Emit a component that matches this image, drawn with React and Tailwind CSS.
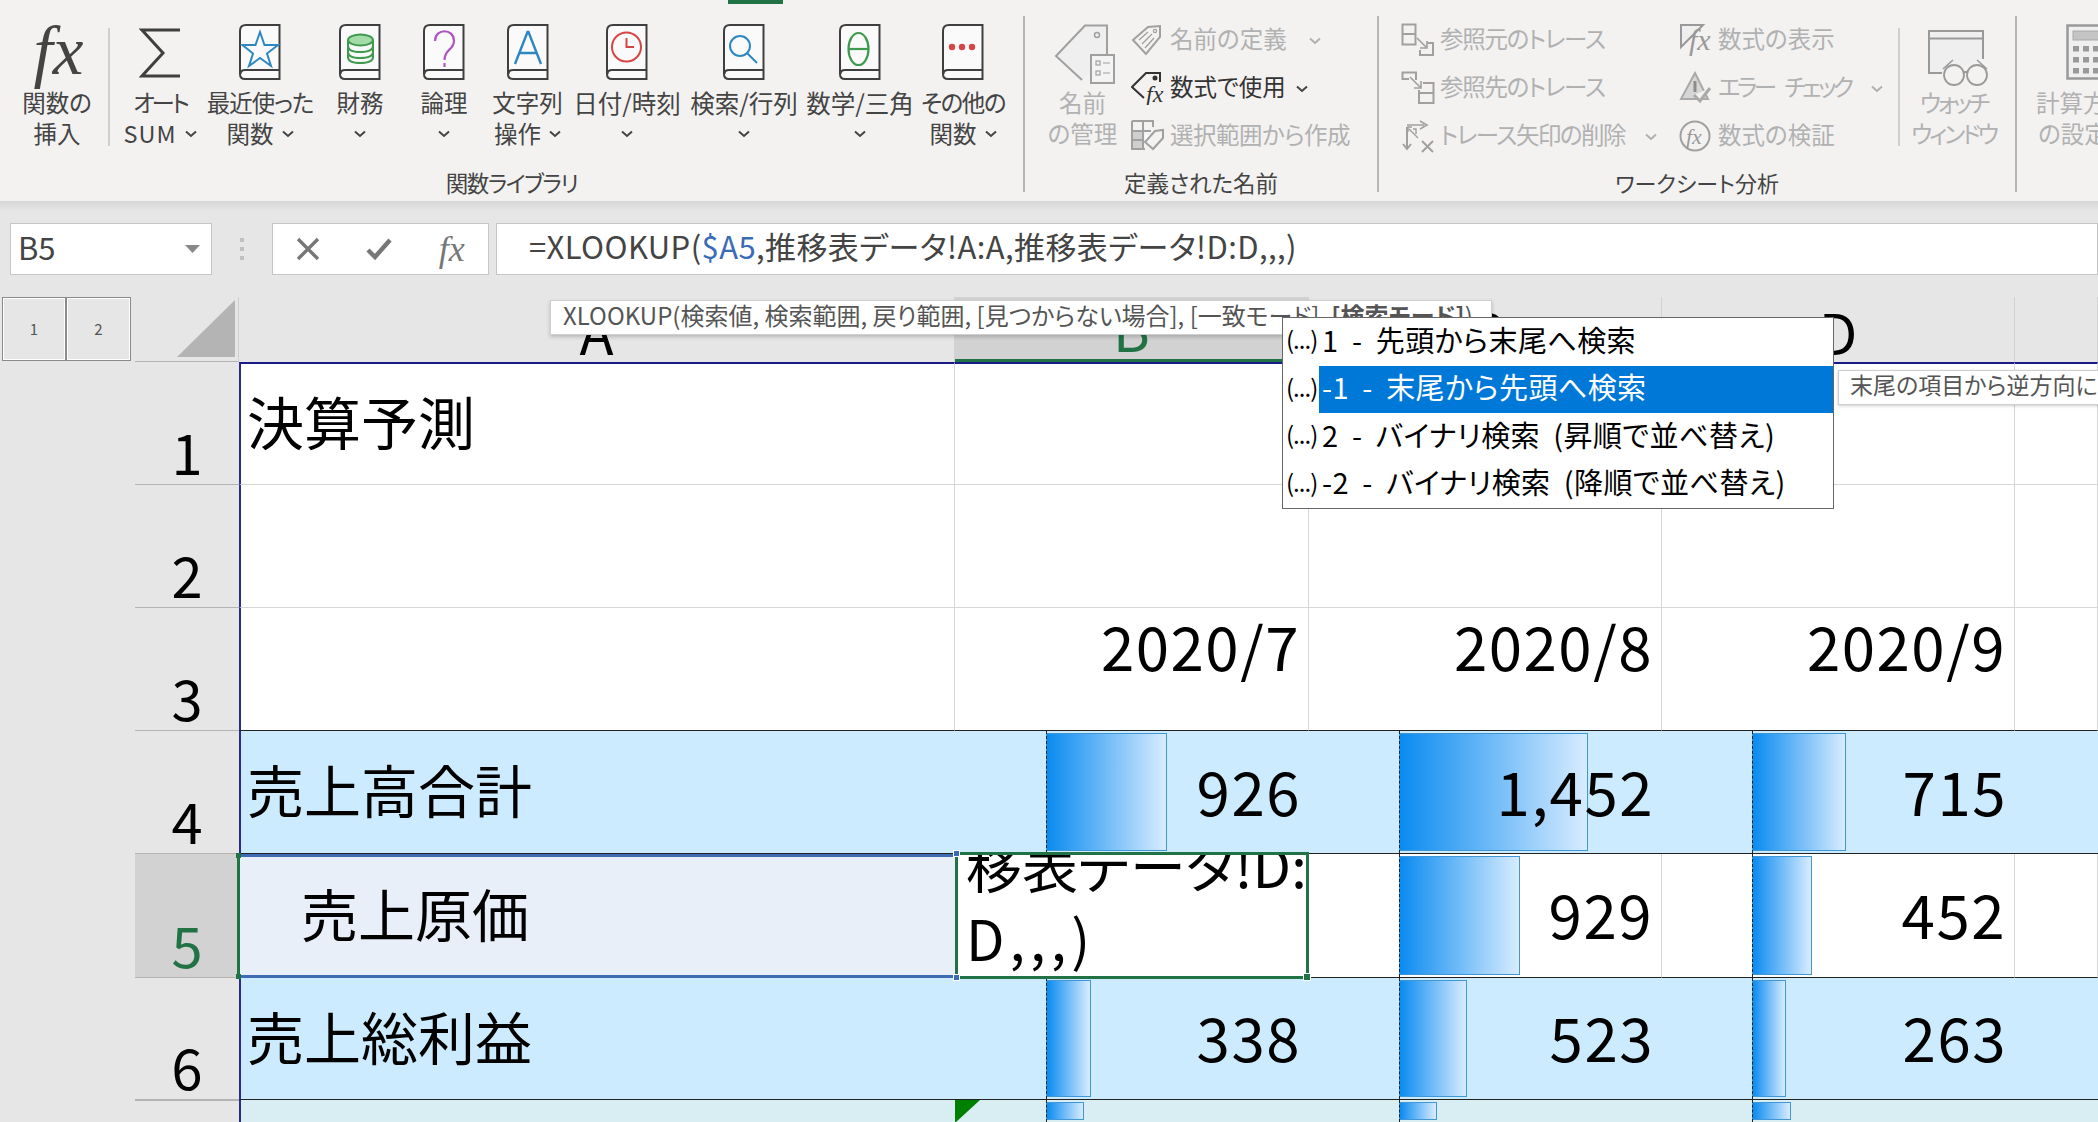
import React from "react";

const Chev = ({ dark }) => (
  <svg width="12" height="8" viewBox="0 0 12 8" className="inline-block shrink-0" fill="none" stroke={dark ? "#444" : "#b0b0b0"} strokeWidth="2">
    <path d="M1 1.5 L6 6 L11 1.5" />
  </svg>
);

const Book = ({ children }) => (
  <svg width="42" height="57" viewBox="0 0 42 57" fill="none">
    <path d="M7 1 H40.5 V55 H6 Q1 55 1 50 V7 Q1 1 7 1 Z" fill="#fafafa" stroke="#3f3f3f" strokeWidth="2" />
    <path d="M40 46 H6 Q1.5 46 1.5 50" stroke="#3f3f3f" strokeWidth="2" />
    {children}
  </svg>
);

const Large = ({ w, icon, lines, muted }) => (
  <div className={`${w} flex flex-col items-center shrink-0 pt-[24px] ${muted ? "text-[#b1b1b1]" : "text-[#444]"}`}>
    <div className="h-[63px] flex items-start justify-center">{icon}</div>
    <div className="text-center leading-[31px] whitespace-nowrap text-[23.5px]">
      {lines.map((l, i) => (
        <div key={i} className="h-[31px] flex items-center justify-center gap-[8px]">
          {l === "v" ? <Chev dark={!muted} /> : l}
        </div>
      ))}
    </div>
  </div>
);

const LineWithChev = ({ t, muted }) => (
  <span className="flex items-center gap-[8px]">
    {t}
    <Chev dark={!muted} />
  </span>
);

const Small = ({ icon, label, dark, chev, gap }) => (
  <div className={`h-[48px] flex items-center text-[23.5px] whitespace-nowrap ${dark ? "text-[#333]" : "text-[#b1b1b1]"}`}>
    <div className="w-[39px] shrink-0">{icon}</div>
    <span className="pb-[4px]">{label}</span>
    {chev && <span className={`${gap} flex`}><Chev dark={dark} /></span>}
  </div>
);

const G = "#a0a0a0";

const fxText = (x, y, size, fill) => (
  <text x={x} y={y} fontFamily="Liberation Serif" fontStyle="italic" fontSize={size} fill={fill}>fx</text>
);

const NameMgr = (
  <svg width="62" height="62" viewBox="0 0 62 62" fill="none" className="ml-[4px]">
    <path d="M53 34 V1.5 H31 L2 32 L28 56" fill="#efefef" stroke={G} strokeWidth="2" />
    <circle cx="43" cy="11" r="2.5" stroke={G} strokeWidth="1.5" />
    <rect x="37" y="31" width="23" height="28" fill="#f3f3f3" stroke={G} strokeWidth="2" />
    <rect x="42" y="37" width="4" height="4" stroke={G} strokeWidth="1.2" />
    <rect x="42" y="47" width="4" height="4" stroke={G} strokeWidth="1.2" />
    <path d="M49 39 H56 M49 49 H56" stroke={G} strokeWidth="1.2" />
  </svg>
);
const DefineName = (
  <svg width="32" height="32" viewBox="0 0 32 32" fill="none" stroke={G} strokeWidth="2" className="-mt-[2px]">
    <path d="M2 16 L17 3 L29 2 L29 13 L15 30 Z" fill="#f3f2f1" />
    <circle cx="24" cy="7" r="1.6" strokeWidth="1.2" />
    <path d="M8 16 L17 8 M11 20 L21 10 M14 24 L23 14" strokeWidth="1.3" />
  </svg>
);
const UseFormula = (
  <svg width="34" height="34" viewBox="0 0 34 34" fill="none" className="-mt-[2px]">
    <path d="M29 11 V2 H15 L1 16 L13 27" stroke="#333" strokeWidth="2" />
    <circle cx="24" cy="7" r="2.5" fill="#333" />
    {fxText(15, 31, 24, "#333")}
  </svg>
);
const CreateSel = (
  <svg width="34" height="34" viewBox="0 0 34 34" fill="none" stroke={G} strokeWidth="2" className="-mt-[2px]">
    <rect x="14" y="16" width="9" height="9" fill="#fff" stroke="none" />
    <rect x="2" y="12" width="10" height="18" fill="#cfcfcf" stroke="none" />
    <path d="M1 2 H23 M1 2 V30 H14 M1 12 H20 M12 2 V30 M1 21 H12 M22 2 V8" />
    <path d="M14 23 L24 12 L32 11 L32 19 L22 30 Z" fill="#f3f2f1" />
  </svg>
);
const TraceP = (
  <svg width="34" height="34" viewBox="0 0 34 34" fill="none" stroke="#a0a0a0" strokeWidth="2" className="-mt-[3px]">
    <rect x="1.5" y="1.5" width="13" height="20" />
    <path d="M1.5 11 H14.5" />
    <path d="M16 15 L25 24 M19 25 H26 V18" strokeWidth="1.6" />
    <path d="M26 20 H32 V32 H19 V27" />
  </svg>
);
const TraceD = (
  <svg width="34" height="34" viewBox="0 0 34 34" fill="none" stroke="#a0a0a0" strokeWidth="2" className="-mt-[3px]">
    <path d="M1.5 9 V1.5 H15 V9" />
    <path d="M1.5 8 H8" />
    <path d="M9 6 L19 16 M13 17 H20 V10" strokeWidth="1.6" />
    <path d="M22 12 H32.5 V32 H18 V19" />
    <path d="M18 22 H32.5" />
  </svg>
);
const RemoveArrows = (
  <svg width="34" height="34" viewBox="0 0 34 34" fill="none" stroke="#a0a0a0" strokeWidth="2" className="-mt-[3px]">
    <path d="M6 8 V30 M2 25 L6 30 L10 25" />
    <path d="M6 6 H23 M19 2 L26 6 L19 10" strokeWidth="1.6" />
    <path d="M8 10 L17 19 M11 8 H7 V13 M12 10 H15 V15" strokeWidth="1.4" />
    <path d="M21 22 L32 33 M32 22 L21 33" />
  </svg>
);
const ShowF = (
  <svg width="34" height="34" viewBox="0 0 34 34" fill="none" className="-mt-[3px]">
    <path d="M2 24 V2 H24 Z" stroke="#999" strokeWidth="2" fill="#efefef" />
    {fxText(10, 27, 30, "#999")}
  </svg>
);
const ErrChk = (
  <svg width="34" height="34" viewBox="0 0 34 34" fill="none" className="-mt-[3px]">
    <path d="M16 2 L29 28 H2 Z" fill="#d6d6d6" stroke="#aaa" strokeWidth="2" />
    <rect x="14.5" y="10" width="3" height="11" fill="#8c8c8c" />
    <path d="M15 24 L21 30 L31 17" stroke="#aaa" strokeWidth="3" fill="#f3f2f1" />
  </svg>
);
const Evaluate = (
  <svg width="34" height="34" viewBox="0 0 34 34" fill="none" className="-mt-[3px]">
    <circle cx="16" cy="17" r="14.5" stroke="#a0a0a0" strokeWidth="2" />
    {fxText(7, 25, 22, "#999")}
  </svg>
);
const Watch = (
  <svg width="62" height="58" viewBox="0 0 62 58" fill="none" stroke="#999" strokeWidth="2">
    <path d="M15 44 H2 V2 H56 V30" fill="#efefef" />
    <path d="M2 9.5 H56" />
    <path d="M16 40 L26 31 M60 40 L50 31" strokeWidth="1.5" />
    <circle cx="27" cy="46" r="10" fill="#f3f2f1" strokeWidth="1.8" />
    <circle cx="50" cy="46" r="10" fill="#f3f2f1" strokeWidth="1.8" />
    <path d="M37 43 H40" />
  </svg>
);
const Calc = (
  <svg width="42" height="56" viewBox="0 0 42 56" fill="none" className="ml-[8px]">
    <rect x="1.5" y="1.5" width="39" height="53" fill="#efefef" stroke="#999" strokeWidth="2.5" />
    <rect x="7" y="7" width="30" height="9" fill="#c4c4c4" stroke="#aaa" />
    {[22, 33, 44].map((y) => [7, 17, 27].map((x) => <rect key={`${x}-${y}`} x={x} y={y} width="6" height="5.5" fill="#999" />))}
  </svg>
);

const blue = "#2f87c2";
const red = "#d64545";
const ribbonBooks = [
  { w: "w-[110px]", l: [<span className="tracking-[-1px]" key="x">最近使った</span>, <LineWithChev t="関数" key="a" />], i: <path d="M21 8 L25.5 21 L39 21 L28 29.5 L32 42 L21 34 L10 42 L14 29.5 L3.5 21 L16.5 21 Z" stroke={blue} strokeWidth="2" /> },
  { w: "w-[90px]", l: ["財務", "v"], i: (
    <g stroke="#3f9a4d" strokeWidth="2">
      <path d="M9 16 V33 Q9 39 21 39 Q34 39 34 33 V16" />
      <path d="M9 22 Q9 28 21 28 Q34 28 34 22 M9 28 Q9 34 21 34 Q34 34 34 28" />
      <ellipse cx="21.5" cy="16" rx="12.5" ry="5.5" fill="#a4dca8" />
    </g>
  ) },
  { w: "w-[78px]", l: ["論理", "v"], i: (
    <g stroke="#ae55c2" strokeWidth="2.2">
      <path d="M12 17 C12 4 31 4 31 17 C31 26 21.5 25 21.5 36" />
      <path d="M21.5 39 V43" />
    </g>
  ) },
  { w: "w-[89px]", l: ["文字列", <LineWithChev t="操作" key="b" />], i: <path d="M8 40 L20.5 8 L21.5 8 L34 40 M12 29 H30" stroke={blue} strokeWidth="2.4" /> },
  { w: "w-[110px]", l: [<span className="text-[24.5px]" key="x">日付/時刻</span>, "v"], i: (
    <g stroke={red} strokeWidth="2">
      <circle cx="20.5" cy="23" r="14.5" />
      <path d="M20.5 14 V23 H28" />
    </g>
  ) },
  { w: "w-[124px]", l: [<span className="text-[24.5px]" key="x">検索/行列</span>, "v"], i: (
    <g stroke={blue} strokeWidth="2">
      <circle cx="17" cy="22" r="10" />
      <path d="M24 29 L34 39" />
    </g>
  ) },
  { w: "w-[108px]", l: [<span className="text-[24.5px]" key="x">数学/三角</span>, "v"], i: (
    <g stroke="#3f9a4d" strokeWidth="2.2">
      <ellipse cx="19.5" cy="25" rx="10" ry="16" />
      <path d="M9.5 25 H29.5" />
    </g>
  ) },
  { w: "w-[98px]", l: [<span className="tracking-[-1.5px]" key="x">その他の</span>, <LineWithChev t="関数" key="c" />], i: (
    <g fill={red}>
      <circle cx="10" cy="23" r="3.2" />
      <circle cx="20" cy="23" r="3.2" />
      <circle cx="30" cy="23" r="3.2" />
    </g>
  ) },
];

const Sep = () => <div className="w-[2px] h-[176px] mt-[16px] shrink-0 bg-[#b8b6b4]" />;

const Ribbon = () => (
  <div className="flex h-[201px] bg-[#f3f2f1] shrink-0">
    <div className="w-[1023px] shrink-0 flex flex-col">
      <div className="h-[166px] flex pl-[12px]">
        <Large
          w="w-[90px]"
          lines={["関数の", "挿入"]}
          icon={<span className="font-['Liberation_Serif',serif] italic text-[69px] leading-[55px] text-[#444] pl-[3px]">fx</span>}
        />
        <div className="w-[2px] h-[118px] mt-[28px] ml-[6px] mr-[5px] bg-[#cfcfcf]" />
        <Large
          w="w-[90px]"
          lines={[<span className="tracking-[-3px]" key="x">オート</span>, <LineWithChev t={<span className="tracking-[1px]">SUM</span>} key="s" />]}
          icon={
            <svg width="42" height="52" viewBox="0 0 42 52" fill="none" stroke="#3f3f3f" strokeWidth="3" className="mt-[3px]">
              <path d="M41 3 H3 L24 26 L3 49 H41" />
            </svg>
          }
        />
        {ribbonBooks.map((b, i) => (
          <Large key={i} w={b.w} lines={b.l} icon={<Book>{b.i}</Book>} />
        ))}
      </div>
      <div className="h-[33px] leading-[33px] text-center text-[22.5px] tracking-[-1.5px] text-[#444]">関数ライブラリ</div>
    </div>
    <Sep />
    <div className="w-[352px] shrink-0 flex flex-col">
      <div className="h-[166px] flex pl-[9px]">
        <Large muted w="w-[97px]" lines={["名前", "の管理"]} icon={NameMgr} />
        <div className="flex flex-col pt-[17px]">
          <Small icon={DefineName} label="名前の定義" chev gap="ml-[22px]" />
          <Small icon={UseFormula} label="数式で使用" dark chev gap="ml-[10px]" />
          <Small icon={CreateSel} label={<span className="tracking-[-0.5px]">選択範囲から作成</span>} />
        </div>
      </div>
      <div className="h-[33px] leading-[33px] text-center text-[22.5px] text-[#444]">定義された名前</div>
    </div>
    <Sep />
    <div className="w-[636px] shrink-0 flex flex-col">
      <div className="h-[166px] flex pl-[22px]">
        <div className="w-[278px] shrink-0 flex flex-col pt-[17px]">
          <Small icon={TraceP} label={<span className="tracking-[-1.3px]">参照元のトレース</span>} />
          <Small icon={TraceD} label={<span className="tracking-[-1.3px]">参照先のトレース</span>} />
          <Small icon={RemoveArrows} label={<span className="tracking-[-1.5px]">トレース矢印の削除</span>} chev gap="ml-[20px]" />
        </div>
        <div className="w-[219px] shrink-0 flex flex-col pt-[17px]">
          <Small icon={ShowF} label="数式の表示" />
          <Small icon={ErrChk} label={<span className="tracking-[-3.5px] [word-spacing:9px]">エラー チェック</span>} chev gap="ml-[20px]" />
          <Small icon={Evaluate} label="数式の検証" />
        </div>
        <div className="w-[2px] h-[118px] mt-[28px] bg-[#cfcfcf]" />
        <Large
          muted
          w="w-[107px]"
          lines={[<span className="tracking-[-3px]" key="a">ウォッチ</span>, <span className="tracking-[-3px]" key="b">ウィンドウ</span>]}
          icon={<div className="mt-[5px] ml-[8px]">{Watch}</div>}
        />
      </div>
      <div className="h-[33px] leading-[33px] text-center text-[22px] text-[#444]">ワークシート分析</div>
    </div>
    <Sep />
    <div className="flex-1 min-w-0">
      <Large muted w="w-[132px]" lines={["計算方法", <LineWithChev muted t="の設定" key="k" />]} icon={Calc} />
    </div>
  </div>
);

const FormulaBar = () => (
  <div className="h-[96px] shrink-0 pt-[22px] flex bg-[linear-gradient(180deg,#d6d6d6_0px,#e6e6e6_10px)]">
    <div className="ml-[10px] w-[202px] h-[52px] bg-white border border-[#c6c6c6] flex items-center justify-between pl-[7px] pr-[11px] text-[31px] text-[#444]">
      <span className="pb-[4px]">B5</span>
      <svg width="15" height="8" viewBox="0 0 15 8"><path d="M0 0 H15 L7.5 8 Z" fill="#888" /></svg>
    </div>
    <div className="w-[60px] h-[52px] flex flex-col items-center justify-center gap-[5px]">
      <i className="w-[4px] h-[4px] bg-[#c0c0c0] block" />
      <i className="w-[4px] h-[4px] bg-[#c0c0c0] block" />
      <i className="w-[4px] h-[4px] bg-[#c0c0c0] block" />
    </div>
    <div className="w-[217px] h-[52px] bg-white border border-[#c6c6c6] flex items-center justify-around text-[#777]">
      <svg width="24" height="24" viewBox="0 0 24 24" fill="none" stroke="#777" strokeWidth="3.4"><path d="M2 2 L22 22 M22 2 L2 22" /></svg>
      <svg width="26" height="22" viewBox="0 0 26 22" fill="none" stroke="#777" strokeWidth="4.4"><path d="M2 12 L9 19 L24 2" /></svg>
      <span className="font-['Liberation_Serif',serif] italic text-[36px] leading-none text-[#777]">fx</span>
    </div>
    <div className="ml-[7px] flex-1 h-[52px] bg-white border border-[#c6c6c6] flex items-center pl-[32px] pb-[5px] text-[31px] tracking-[0.4px] text-[#444] whitespace-pre">
      =XLOOKUP(<span className="text-[#3a6cb5]">$A5</span>,推移表データ!A:A,推移表データ!D:D,,,)
    </div>
  </div>
);

const Bar = ({ w, left }) => (
  <>
    <div
      className={`absolute ${left} top-[2px] bottom-[2px] border border-[#3f97d8] bg-[linear-gradient(90deg,#0a8bf0,#d8ecff)]`}
      style={{ width: w + 1 }}
    />
    <div className={`absolute ${left} top-0 bottom-0 border-l border-dashed border-[#222]`} />
  </>
);

const Cell = ({ fill, grid, bar, left = "left-[90px]", text, cn = "", navy }) => (
  <div
    className={`relative overflow-hidden flex items-center justify-end pr-[8px] border-b ${
      grid ? "border-r border-r-[#d6d6d6]" : ""
    } ${navy ? "border-t-2 border-t-[#1a1a8a]" : ""} ${fill} ${cn}`}
  >
    {bar != null && <Bar w={bar} left={left} />}
    {text && <span className="relative mb-[5px] text-[60px] tracking-[1.5px] leading-none whitespace-nowrap text-black">{text}</span>}
  </div>
);

const RowHead = ({ n, active }) => (
  <div className={`flex items-end justify-center pb-[5px] border-b border-[#b4b4b4] ${active ? "bg-[#d2d2d2] text-[#217346]" : "text-black"}`}>
    <span className="text-[56px] leading-none">{n}</span>
  </div>
);

const Gutter = () => <div className="bg-[#e6e6e6]" />;

const ALabel = ({ t, fill }) => (
  <div className={`flex items-center border-b border-[#222] border-l-2 border-l-[#2a2a90] pl-[6px] pb-[7px] text-[57px] leading-none text-black whitespace-nowrap ${fill}`}>
    {t}
  </div>
);

const HeadCol = ({ t, active }) => (
  <div className={`flex items-end justify-center pb-[3px] border-r border-[#d2d2d2] text-[56px] leading-none ${active ? "bg-[#d2d2d2] text-[#217346] border-b-[3px] border-b-[#217346]" : "text-black"}`}>
    {t}
  </div>
);

const BLUE = "bg-[#cdebff]";
const TEAL = "bg-[#d9eef3]";

const Sheet = () => (
  <div className="grid flex-1 grid-cols-[135px_104px_716px_354px_353px_353px_1fr] grid-rows-[65px_123px_123px_123px_123px_124px_122px_1fr] bg-[#e6e6e6]">
    {/* header */}
    <div className="flex items-start pl-[2px]">
      <button className="w-[64px] h-[64px] border border-[#8a8a8a] text-[15px] text-[#555] bg-[#e6e6e6] shadow-[inset_0_0_0_1px_#fff]">1</button>
      <button className="w-[65px] h-[64px] border border-[#8a8a8a] text-[15px] text-[#555] bg-[#e6e6e6] shadow-[inset_0_0_0_1px_#fff]">2</button>
    </div>
    <div className="flex items-end justify-end pr-[3px] pb-[4px] border-b border-[#b4b4b4] border-r border-r-[#cfcfcf]">
      <svg width="58" height="57" viewBox="0 0 58 57"><path d="M0 57 L58 0 V57 Z" fill="#b4b4b4" /></svg>
    </div>
    <HeadCol t="A" />
    <HeadCol t="B" active />
    <HeadCol t="C" />
    <HeadCol t="D" />
    <HeadCol t="" />

    {/* row 1 */}
    <Gutter />
    <RowHead n="1" />
    <div className="flex items-center pl-[6px] pb-[8px] text-[57px] leading-none text-black border-b border-[#d6d6d6] border-t-2 border-t-[#1a1a8a] border-r border-r-[#d6d6d6] border-l-2 border-l-[#2a2a90] bg-white">決算予測</div>
    {[0, 1, 2, 3].map((i) => <Cell key={i} grid navy fill="bg-white border-b-[#d6d6d6]" />)}

    {/* row 2 */}
    <Gutter />
    <RowHead n="2" />
    <div className="border-b border-[#d6d6d6] border-r border-r-[#d6d6d6] border-l-2 border-l-[#2a2a90] bg-white" />
    {[0, 1, 2, 3].map((i) => <Cell key={i} grid fill="bg-white border-b-[#d6d6d6]" />)}

    {/* row 3 */}
    <Gutter />
    <RowHead n="3" />
    <div className="border-b border-[#222] border-r border-r-[#d6d6d6] border-l-2 border-l-[#2a2a90] bg-white" />
    <Cell grid fill="bg-white border-b-[#222] pb-[44px]" text="2020/7" />
    <Cell grid fill="bg-white border-b-[#222] pb-[44px]" text="2020/8" />
    <Cell grid fill="bg-white border-b-[#222] pb-[44px]" text="2020/9" />
    <Cell grid fill="bg-white border-b-[#222]" />

    {/* row 4 */}
    <Gutter />
    <RowHead n="4" />
    <ALabel t="売上高合計" fill={BLUE} />
    <Cell fill={`${BLUE} border-b-[#222]`} bar={120} left="left-[91px]" text="926" />
    <Cell fill={`${BLUE} border-b-[#222]`} bar={188} text="1,452" />
    <Cell fill={`${BLUE} border-b-[#222]`} bar={93} text="715" />
    <Cell fill={`${BLUE} border-b-[#222]`} />

    {/* row 5 */}
    <Gutter />
    <RowHead n="5" active />
    <div className="relative -ml-[2px] flex items-center pl-[61px] pb-[8px] text-[57px] leading-none text-black whitespace-nowrap bg-[#e9eff9] border-y-[3px] border-y-[#3e6cb4] border-l-[3px] border-l-[#217346]">
      売上原価
      <i className="absolute -left-[4px] -top-[4px] w-[5px] h-[5px] bg-[#217346]" />
      <i className="absolute -left-[4px] -bottom-[4px] w-[5px] h-[5px] bg-[#217346]" />
    </div>
    <div className="relative z-10 -mt-[2px] -mb-[1px] bg-white border-[3px] border-[#217346] text-[56px] leading-[73px] text-black whitespace-nowrap">
      <div className="absolute inset-0 overflow-hidden flex flex-col justify-end pl-[8px] pb-[3px]">
        <div className="shrink-0">移表データ!D:</div>
        <div className="shrink-0 tracking-[5px]">D,,,)</div>
      </div>
      <i className="absolute -left-[5px] -top-[5px] w-[7px] h-[7px] bg-[#3e6cb4] border border-white" />
      <i className="absolute -left-[5px] -bottom-[5px] w-[7px] h-[7px] bg-[#3e6cb4] border border-white" />
      <i className="absolute -right-[5px] -bottom-[5px] w-[8px] h-[8px] bg-[#217346] border border-white" />
    </div>
    <Cell grid fill="bg-white border-b-[#222]" bar={120} text="929" />
    <Cell grid fill="bg-white border-b-[#222]" bar={59} text="452" />
    <Cell grid fill="bg-white border-b-[#222]" />

    {/* row 6 */}
    <Gutter />
    <RowHead n="6" />
    <ALabel t="売上総利益" fill={BLUE} />
    <Cell fill={`${BLUE} border-b-[#222]`} bar={44} left="left-[91px]" text="338" />
    <Cell fill={`${BLUE} border-b-[#222]`} bar={67} text="523" />
    <Cell fill={`${BLUE} border-b-[#222]`} bar={33} text="263" />
    <Cell fill={`${BLUE} border-b-[#222]`} />

    {/* row 7 */}
    <Gutter />
    <div className="border-t border-[#b4b4b4]" />
    <div className={`${TEAL} border-l-2 border-l-[#2a2a90]`} />
    <div className={`relative overflow-hidden ${TEAL}`}>
      <svg width="25" height="23" viewBox="0 0 25 23" className="absolute left-0 top-0"><path d="M0 0 H25 L0 23 Z" fill="#008000" /></svg>
      <Bar w={37} left="left-[91px]" />
    </div>
    <div className={`relative overflow-hidden ${TEAL}`}><Bar w={37} left="left-[90px]" /></div>
    <div className={`relative overflow-hidden ${TEAL}`}><Bar w={38} left="left-[90px]" /></div>
    <div className={TEAL} />
  </div>
);

const options = [
  "1 - 先頭から末尾へ検索",
  "-1 - 末尾から先頭へ検索",
  "2 - バイナリ検索 (昇順で並べ替え)",
  "-2 - バイナリ検索 (降順で並べ替え)",
];

const Overlays = () => (
  <>
    <div className="absolute left-[728px] top-0 w-[55px] h-[4px] bg-[#217346]" />
    <div className="absolute left-[550px] top-[300px] w-[942px] h-[35px] bg-white border border-[#cfcfcf] shadow-[0_2px_4px_rgba(0,0,0,0.2)] pl-[12px] text-[24px] leading-[27px] text-[#555] whitespace-nowrap">
      XLOOKUP(検索値, 検索範囲, 戻り範囲, [見つからない場合], [一致モード], <b className="font-bold">[検索モード]</b>)
    </div>
    <div className="absolute left-[1282px] top-[317px] w-[552px] h-[192px] bg-white border border-[#666] text-[29px] tracking-[0.4px] [word-spacing:6.5px] text-black whitespace-pre">
      {options.map((o, i) => (
        <div key={o} className="flex items-center h-[47.5px]">
          <span className="w-[36px] h-full flex items-center shrink-0 pl-[3px] pb-[5px] text-[24px] tracking-[-1px]">(...)</span>
          <span className={`flex-1 h-full flex items-center pl-[3px] pb-[5px] ${i === 1 ? "bg-[#0078d7] text-white" : ""}`}>{o}</span>
        </div>
      ))}
    </div>
    <div className="absolute left-[1838px] top-[370px] w-[300px] h-[35px] bg-white border border-[#cfcfcf] shadow-[0_1px_3px_rgba(0,0,0,0.2)] pl-[11px] text-[23px] leading-[27px] text-[#555] whitespace-nowrap">
      末尾の項目から逆方向に検索を実行します
    </div>
  </>
);

export default function App() {
  return (
    <div className="relative w-[2098px] h-[1122px] overflow-hidden flex flex-col bg-[#e6e6e6] font-['Noto_Sans_CJK_JP','Noto_Sans',sans-serif] [font-feature-settings:'palt']">
      <Ribbon />
      <FormulaBar />
      <Sheet />
      <Overlays />
    </div>
  );
}
